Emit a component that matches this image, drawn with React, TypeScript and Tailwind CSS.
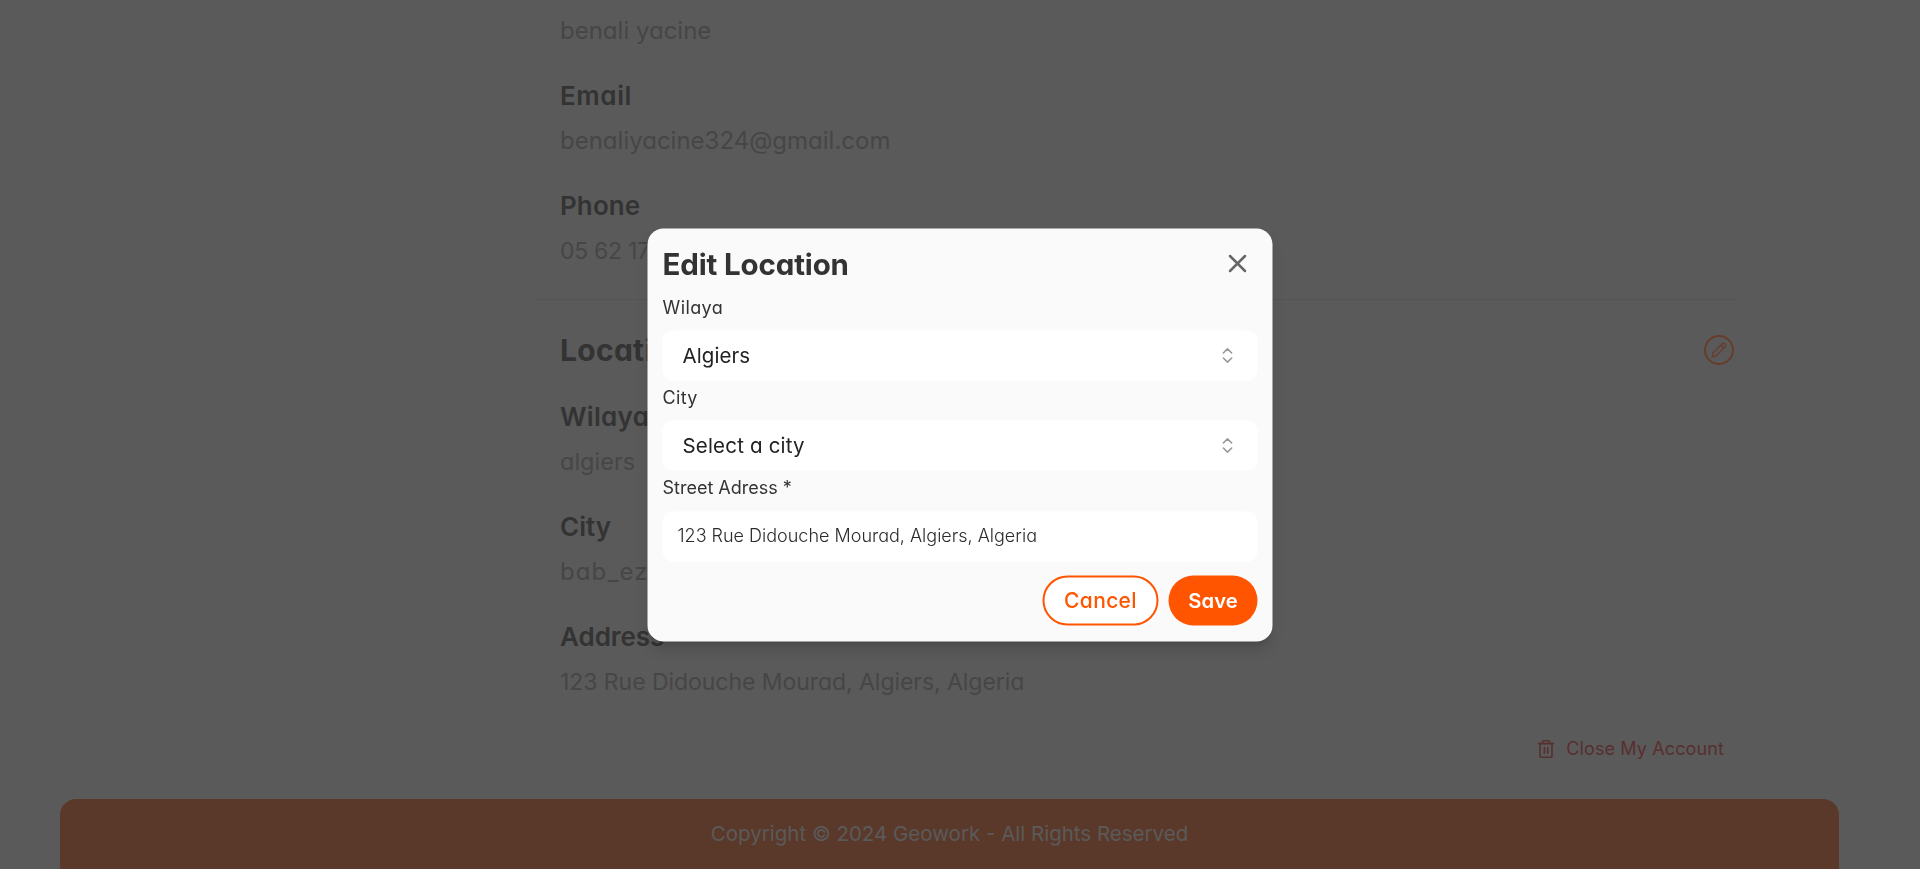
import { ChevronsUpDown, X } from "lucide-react";

type FieldProps = { label: string; value: string; labelClass: string; valueClass: string };

function InfoField({ label, value, labelClass, valueClass }: FieldProps) {
  return (
    <div className="flex flex-col gap-[9px]">
      <h3 className={`h-9 text-[26px] leading-9 font-semibold whitespace-nowrap text-[#333333] ${labelClass}`}>{label}</h3>
      <p className={`h-9 leading-9 whitespace-nowrap text-[#464646] ${valueClass}`}>{value}</p>
    </div>
  );
}

function PencilIcon() {
  return (
    <svg width="16" height="16" viewBox="0 0 16 16" fill="none" stroke="currentColor" strokeWidth="1.3" strokeLinejoin="round" strokeLinecap="round">
      <path d="M1.2 14.8 2 11 11 2a2.12 2.12 0 0 1 3 3l-9 9-3.8.8ZM9.8 3.2l3 3" />
    </svg>
  );
}

function TrashIcon() {
  return (
    <svg width="18" height="20" viewBox="0 0 18 20" fill="none" stroke="currentColor" strokeWidth="1.6" strokeLinecap="round" strokeLinejoin="round">
      <path d="M1.5 4.6h15M5.4 4.4V3.2a1.500 1.500 0 0 1 1.500-1.500h4.200a1.500 1.500 0 0 1 1.500 1.500v1.200M3 4.800v12.400a1.100 1.100 0 0 0 1.100 1.100h9.800a1.100 1.100 0 0 0 1.100-1.100V4.800M7.400 8.500v5.800M10.700 8.500v5.800" />
    </svg>
  );
}

function SelectBox({ value, className }: { value: string; className: string }) {
  return (
    <button className="mt-[11.5px] flex h-[50px] w-full items-center justify-between rounded-[10px] bg-white px-5">
      <span className={`text-[20.5px] leading-7 text-[#222222] ${className}`}>{value}</span>
      <ChevronsUpDown size={20} strokeWidth={1.9} className="text-[#999999]" />
    </button>
  );
}

export default function App() {
  return (
    <div className="h-[869px] w-full overflow-hidden bg-[#5a5a5a] font-['Inter',sans-serif] [font-feature-settings:'cv11']">
      <main className="ml-[530px] flex w-[1209px] flex-col pt-[13px]">
        <section className="flex flex-col gap-[29px] pl-[30px]">
          <p className="h-9 text-[24px] leading-9 text-[#464646]">benali yacine</p>
          <InfoField label="Email" value="benaliyacine324@gmail.com" labelClass="tracking-[0.6px]" valueClass="text-[24px]" />
          <InfoField label="Phone" value="05 62 17 48 93" labelClass="tracking-[0.1px]" valueClass="text-[23px] tracking-[-0.3px]" />
        </section>
        <hr className="mt-[30px] ml-[5px] border-t border-[#555555]" />
        <section className="mt-8 flex flex-col pr-[5px] pl-[30px]">
          <div className="flex h-9 items-center justify-between">
            <h2 className="text-[30px] leading-9 font-bold tracking-[0.3px] text-[#333333]">Location</h2>
            <button className="flex size-[30px] items-center justify-center rounded-full border-2 border-[#683c2a] text-[#683c2a]">
              <PencilIcon />
            </button>
          </div>
          <div className="mt-[31px] flex flex-col gap-[29px]">
            <InfoField label="Wilaya" value="algiers" labelClass="tracking-[0.3px]" valueClass="text-[23.5px]" />
            <InfoField label="City" value="bab_ezzouar" labelClass="tracking-[0px]" valueClass="text-[24px] tracking-[1.1px]" />
            <InfoField label="Address" value="123 Rue Didouche Mourad, Algiers, Algeria" labelClass="tracking-[-0.05px]" valueClass="text-[23px] tracking-[-0.05px]" />
          </div>
          <button className="mt-[37px] mr-[10px] flex h-6 items-center gap-[11px] self-end text-[#582f2f]">
            <TrashIcon />
            <span className="text-[18px] leading-6 tracking-[0.12px] whitespace-nowrap">Close My Account</span>
          </button>
        </section>
      </main>
      <footer className="mt-[38px] ml-[60px] flex h-[70px] w-[1779px] items-center justify-center rounded-t-[16px] bg-[#5a392a]">
        <p className="text-[20.5px] leading-7 text-[#5a5a5a]">Copyright © 2024 Geowork - All Rights Reserved</p>
      </footer>

      <div className="fixed top-1/2 left-1/2 flex h-[413px] w-[625px] -translate-x-1/2 -translate-y-1/2 flex-col rounded-[16px] bg-[#fafafa] px-[15px] pt-[18px] shadow-[0_10px_15px_-3px_rgba(0,0,0,0.15),0_4px_6px_-4px_rgba(0,0,0,0.15)]">
        <div className="flex h-[34px] items-center justify-between pr-[5px]">
          <h2 className="text-[29.5px] leading-[34px] font-bold tracking-[-0.15px] text-[#333333]">Edit Location</h2>
          <button className="text-[#666666]"><X size={30} strokeWidth={2} /></button>
        </div>
        <label className="mt-[15px] h-6 text-[18px] leading-6 tracking-[0.4px] text-[#333333]">Wilaya</label>
        <SelectBox value="Algiers" className="tracking-[0.07px]" />
        <label className="mt-[4.5px] h-6 text-[18px] leading-6 tracking-[0.35px] text-[#333333]">City</label>
        <SelectBox value="Select a city" className="tracking-[0.18px]" />
        <label className="mt-[4.5px] h-6 text-[18px] leading-6 text-[#333333]">Street Adress *</label>
        <div className="mt-[12.5px] flex h-[50px] items-center rounded-[10px] bg-white pb-[2px] pl-[15px]">
          <span className="text-[18px] leading-6 font-light text-[#2b2b2b]">123 Rue Didouche Mourad, Algiers, Algeria</span>
        </div>
        <div className="mt-[14px] flex justify-end gap-[10px]">
          <button className="flex h-[50px] w-[116px] items-center justify-center rounded-full border-2 border-[#ff5500] bg-white text-[21px] font-medium tracking-[0.35px] text-[#ff5500]">Cancel</button>
          <button className="flex h-[50px] w-[89px] items-center justify-center rounded-full bg-[#ff5500] text-[20.3px] font-semibold text-white">Save</button>
        </div>
      </div>
    </div>
  );
}
